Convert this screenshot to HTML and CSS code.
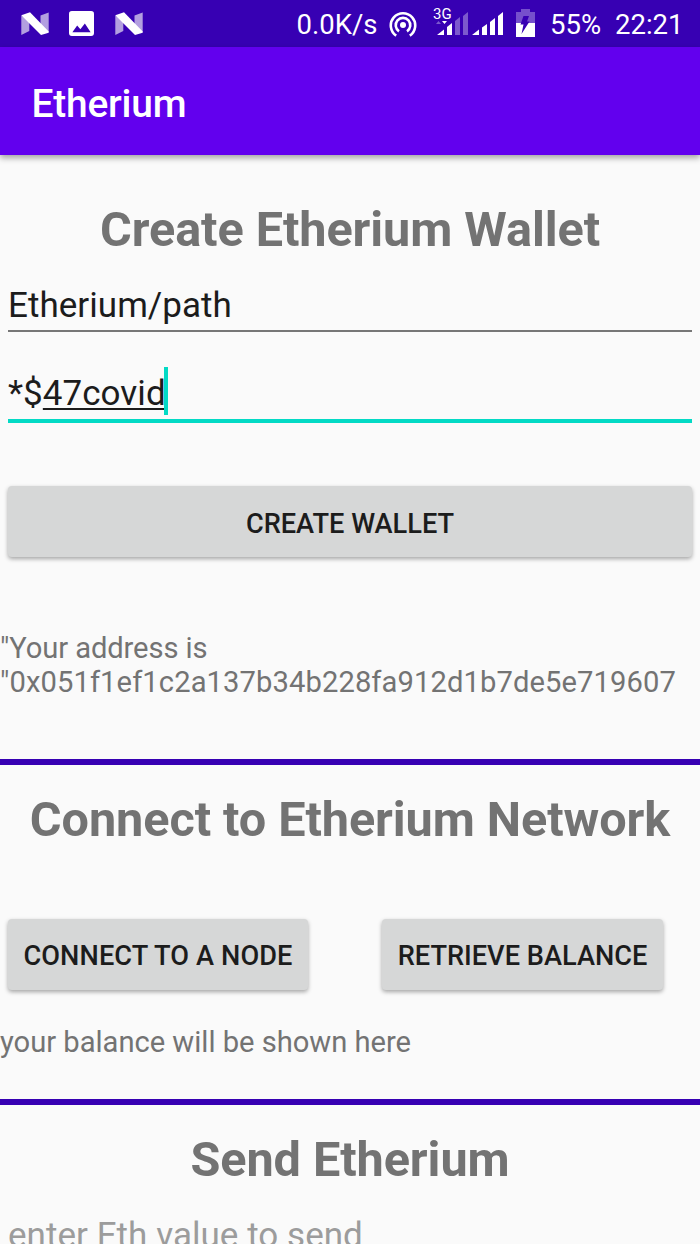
FILE: index.html
```html
<!DOCTYPE html>
<html lang="en">
<head>
<meta charset="utf-8">
<title>Etherium</title>
<link rel="stylesheet" href="styles.css">
</head>
<body>
<div class="status-bar">
  <div class="notifications">
    <svg class="icon-n" viewBox="0 0 28 24"><path d="M.3 3.500V23l8-4V8zM27.700.5l-8.200 3V15l8.200 5z" fill="#b39fe0"/><path d="M.3 3.200 9 .3 27.700 19.500v1.200L20 23z" fill="#fff"/></svg>
    <svg class="icon-photo" viewBox="0 0 26 26"><path fill="#fff" fill-rule="evenodd" d="M3 0h20a3 3 0 0 1 3 3v20a3 3 0 0 1-3 3H3a3 3 0 0 1-3-3V3a3 3 0 0 1 3-3zM3.500 22h19L16.500 13 11.800 19 8.500 15z"/></svg>
    <svg class="icon-n" viewBox="0 0 28 24"><path d="M.3 3.500V23l8-4V8zM27.700.5l-8.200 3V15l8.200 5z" fill="#b39fe0"/><path d="M.3 3.200 9 .3 27.700 19.500v1.200L20 23z" fill="#fff"/></svg>
  </div>
  <span class="speed">0.0K/s</span>
  <svg class="icon-hotspot" viewBox="0 0 28 26"><g fill="none" stroke="#fff" stroke-width="2.600"><path d="M7.200 24.600A12.200 12.200 0 1 1 20.800 24.600"/><path d="M10 20.300A7.300 7.300 0 1 1 18 20.300"/></g><circle cx="14" cy="14" r="3" fill="#fff"/></svg>
  <div class="signal">
    <span class="network">3G</span>
    <svg class="icon-signal" viewBox="0 0 70 24"><g fill="#fff"><path d="M4 23 11 17.500V23zM14 15l5-4v12h-5zM39 23l7-5.500V23zM49 15.500l5-3.500v11h-5zM57 10l5-4v17h-5zM65 4l5-4v23h-5zM9 9h5l-2.500 3z"/><path opacity=".35" d="M22 9l5-4v18h-5zM30 4l5-4v23h-5zM3 12h5L5.500 9z"/></g></svg>
  </div>
  <svg class="icon-battery" viewBox="0 0 19 28"><path fill="#7650cc" d="M5 0h9v3h5v11H0V3h5z"/><path fill="#fff" d="M0 14h19v14H0z"/><path fill="#3700b3" d="M7.500 7h5.500l-2 5.500h2.500L5.500 25l2-9.500H4.500z"/></svg>
  <span class="percent">55%</span>
  <span class="clock">22:21</span>
</div>
<header class="toolbar">Etherium</header>
<main class="content">
  <section class="create">
    <h1 class="heading">Create Etherium Wallet</h1>
    <div class="field">Etherium/path</div>
    <div class="field focused">*$<span class="composing">47covid</span><span class="caret"></span></div>
    <button class="button wide">CREATE WALLET</button>
    <p class="address">"Your address is<br><span class="hash">"0x051f1ef1c2a137b34b228fa912d1b7de5e719607</span></p>
  </section>
  <section class="connect">
    <h1 class="heading">Connect to Etherium Network</h1>
    <div class="actions">
      <button class="button node">CONNECT TO A NODE</button>
      <button class="button balance">RETRIEVE BALANCE</button>
    </div>
    <p class="balance-text">your balance will be shown here</p>
  </section>
  <section class="send">
    <h1 class="heading">Send Etherium</h1>
    <div class="field hint">enter Eth value to send</div>
  </section>
</main>
</body>
</html>
```

FILE: styles.css
```css
* { box-sizing: border-box; }
html { height: 1244px; overflow: hidden; }
body {
  margin: 0;
  height: 1244px;
  overflow: hidden;
  display: flex;
  flex-direction: column;
  background: #fafafa;
  color: #737373;
  font-family: Roboto, "Liberation Sans", sans-serif;
}
svg { display: block; flex: none; }
.status-bar {
  flex: none;
  display: flex;
  height: 47px;
  padding-left: 21px;
  background: #3700b3;
  color: #fff;
  font-size: 27.500px;
  line-height: 32px;
  white-space: nowrap;
}
.notifications { display: flex; width: 275.500px; flex: none; }
.icon-n { width: 28px; height: 24px; margin-top: 11.500px; }
.icon-photo { width: 25px; height: 25px; margin: 11px 20.500px 0 20px; }
.speed { width: 92.500px; margin-top: 9px; }
.icon-hotspot { width: 28px; height: 26px; margin-top: 10.500px; }
.signal { width: 70px; margin: 5px 0 0 16px; }
.network { display: block; height: 7px; font-size: 15px; line-height: 18px; }
.icon-signal { width: 70px; height: 24px; }
.icon-battery { width: 19px; height: 28px; margin: 9px 0 0 13px; }
.percent { width: 65px; margin: 9px 0 0 15px; }
.clock { margin-top: 9px; }
.toolbar {
  flex: none;
  height: 108px;
  padding: 34px 0 0 31.500px;
  background: #6200ee;
  color: #fff;
  font-size: 38.900px;
  font-weight: 500;
  line-height: 46px;
  letter-spacing: -.2px;
  box-shadow: 0 3px 6px rgba(0, 0, 0, .35);
}
.content { flex: none; }
.heading {
  margin: 0;
  font-size: 48.600px;
  font-weight: 700;
  line-height: 56px;
  letter-spacing: -.07px;
  text-align: center;
}
.create { height: 604px; padding-top: 47px; }
.field {
  height: 51px;
  margin: 24px 8px 0;
  padding-top: 4px;
  border-bottom: 2px solid #777;
  color: #1c1c1c;
  font-size: 35px;
  line-height: 42px;
  letter-spacing: .04px;
  white-space: nowrap;
}
.create .heading + .field { margin-top: 23px; }
.field.focused {
  display: flex;
  height: 60px;
  margin-top: 31px;
  padding-top: 10px;
  border-bottom: 4px solid #03dac5;
}
.composing {
  text-decoration: underline;
  text-decoration-thickness: 2px;
  text-underline-offset: 3px;
  text-decoration-skip-ink: none;
}
.caret { width: 4px; height: 48px; margin: -6px 0 0 -2px; background: #03dac5; }
.button {
  display: block;
  height: 71px;
  padding: 3px 0 0;
  border: 0;
  border-radius: 4px;
  background: #d6d7d7;
  box-shadow: 0 2px 4px rgba(0, 0, 0, .34);
  color: #1c1c1c;
  font: 500 27.200px/32px Roboto, "Liberation Sans", sans-serif;
  white-space: nowrap;
}
.wide { width: 684px; margin: 63px 8px 0; padding-top: 4px; }
.address { margin: 74px 0 0; font-size: 29.170px; line-height: 34px; letter-spacing: -.1px; }
.hash { letter-spacing: .09px; }
.connect { height: 340px; padding-top: 27px; border-top: 6px solid #3700b3; }
.actions { display: flex; gap: 74px; margin: 71px 0 0 8px; }
.node { width: 300px; letter-spacing: .1px; }
.balance { width: 281px; }
.balance-text { margin: 35px 0 0; font-size: 29.170px; line-height: 34px; letter-spacing: -.02px; }
.send { padding-top: 27px; border-top: 6px solid #3700b3; }
.hint { margin-top: 23px; color: #9c9c9c; }
```
